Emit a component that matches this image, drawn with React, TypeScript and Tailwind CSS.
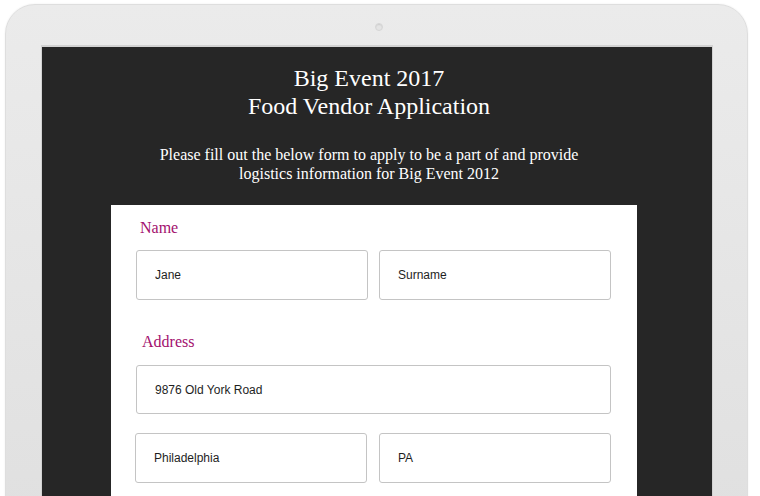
import React from 'react';

const serif = { fontFamily: '"Liberation Serif", "Times New Roman", serif' };

function Field({ value, className }: { value: string; className: string }) {
  return (
    <input
      readOnly
      defaultValue={value}
      className={`border border-[#c4c4c4] rounded-[3px] bg-white pl-[18px] text-[12px] text-[#1e1e1e] outline-none font-['Liberation_Sans',Arial,sans-serif] ${className}`}
    />
  );
}

export default function App() {
  return (
    <div className="w-[760px] h-[496px] overflow-hidden bg-white">
      <div className="ml-[5px] mt-[4px] w-[743px] h-[520px] rounded-t-[30px] border border-[#dedede] bg-gradient-to-b from-[#ebebeb] to-[#e0e0e0] shadow-[0_0_2px_rgba(0,0,0,0.08)]">
        <div className="flex justify-center pt-[18px]">
          <div className="w-[8px] h-[8px] rounded-full bg-[#e4e4e4] border border-[#d6d6d6] shadow-[inset_0_1px_1px_rgba(0,0,0,0.1)] ml-[4px]" />
        </div>
        <div className="mt-[14px] ml-[35px] w-[672px] h-[470px] border-x border-t-2 border-[#d2d2d2] bg-[#262626]">
          <div className="pr-[16px] text-center text-white" style={serif}>
            <h1 className="pt-[17px] text-[24px] leading-[28px]">
              Big Event 2017
              <br />
              Food Vendor Application
            </h1>
            <p className="mt-[25px] text-[16px] leading-[19px] w-[440px] mx-auto">
              Please fill out the below form to apply to be a part of and provide logistics information for Big Event 2012
            </p>
          </div>
          <div className="mt-[22px] ml-[69px] w-[526px] h-[300px] bg-white pt-[13px] pl-[25px] pr-[26px]">
            <div className="pl-[4px] text-[16px] leading-[20px] text-[#a3106e]" style={serif}>Name</div>
            <div className="mt-[12px] flex gap-[11px]">
              <Field value="Jane" className="w-[232px] h-[50px]" />
              <Field value="Surname" className="w-[232px] h-[50px]" />
            </div>
            <div className="mt-[32px] pl-[6px] text-[16px] leading-[20px] text-[#a3106e]" style={serif}>Address</div>
            <Field value="9876 Old York Road" className="mt-[13px] w-[475px] h-[49px]" />
            <div className="mt-[19px] -ml-[1px] flex gap-[12px]">
              <Field value="Philadelphia" className="w-[232px] h-[50px]" />
              <Field value="PA" className="w-[232px] h-[50px]" />
            </div>
          </div>
        </div>
      </div>
    </div>
  );
}
